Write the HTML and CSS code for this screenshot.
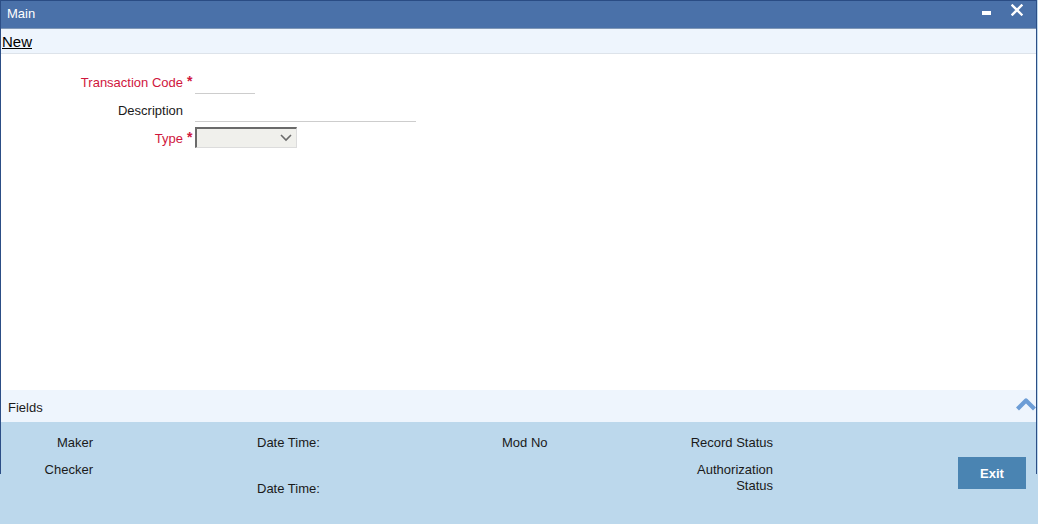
FILE: index.html
```html
<!DOCTYPE html>
<html>
<head>
<meta charset="utf-8">
<link rel="stylesheet" href="styles.css">
</head>
<body>
<div class="window">
  <div class="titlebar">
    <span class="title">Main</span>
    <div class="controls">
      <svg class="ico-min" width="9" height="4" viewBox="0 0 9 4"><rect x="0" y="0" width="9" height="4" fill="#fff"/></svg>
      <svg class="ico-close" width="12" height="12" viewBox="0 0 12 12"><path d="M1.5 1.5 L10.5 10.5 M10.5 1.5 L1.5 10.5" stroke="#fff" stroke-width="2.4" stroke-linecap="square"/></svg>
    </div>
  </div>
  <div class="toolbar"><span class="new">New</span></div>
  <div class="content">
    <div class="form">
      <label class="lbl req">Transaction Code</label><span class="star">*</span><div class="field"><div class="input short"></div></div>
      <label class="lbl">Description</label><span class="star"></span><div class="field"><div class="input long"></div></div>
      <label class="lbl req">Type</label><span class="star">*</span><div class="field"><div class="select"><svg width="12" height="8" viewBox="0 0 12 8"><path d="M1 1 L6 6 L11 1" fill="none" stroke="#6b6b6b" stroke-width="1.6"/></svg></div></div>
    </div>
  </div>
  <div class="fieldsbar">
    <span class="fields">Fields</span>
    <svg class="chev" width="22" height="14" viewBox="0 0 22 14"><path d="M2.5 12 L11 3.5 L19.5 12" fill="none" stroke="#6c9dd6" stroke-width="4.2" stroke-linejoin="round"/></svg>
  </div>
  <div class="footer">
    <div class="col c1"><span>Maker</span><span>Checker</span></div>
    <div class="col c2"><span>Date Time:</span><span>Date Time:</span></div>
    <div class="col c3"><span>Mod No</span></div>
    <div class="col c4"><span>Record Status</span><span>Authorization<br>Status</span></div>
    <div class="col c5"><button class="exit">Exit</button></div>
  </div>
</div>
</body>
</html>
```
FILE: styles.css
```css
html, body {
  margin: 0;
  padding: 0;
}
body {
  background: #bcd8ec;
  font-family: "Liberation Sans", Arial, sans-serif;
  font-size: 13px;
  color: #1a1a1a;
  width: 1038px;
  height: 524px;
  overflow: hidden;
}
.window {
  width: 1037px;
  height: 474px;
  box-sizing: border-box;
  border-left: 1px solid #2c4e86;
  border-right: 1px solid #2c4e86;
  display: flex;
  flex-direction: column;
  background: #fff;
}
.titlebar {
  height: 28px;
  box-sizing: border-box;
  border-top: 1px solid #2a4c84;
  background: #4a71a9;
  display: flex;
  align-items: center;
  justify-content: space-between;
  padding: 0 0 0 6px;
  flex: none;
}
.title {
  color: #fff;
  font-size: 13px;
  margin-top: -2px;
}
.controls {
  display: flex;
  align-items: flex-start;
  height: 27px;
}
.ico-min {
  margin-top: 10px;
  margin-right: 20px;
}
.ico-close {
  margin-top: 3px;
  margin-right: 13px;
}
.toolbar {
  height: 26px;
  box-sizing: border-box;
  background: #eef5fd;
  border-top: 1px solid #7f97b6;
  border-bottom: 1px solid #dde3ea;
  display: flex;
  align-items: center;
  padding-left: 1px;
  flex: none;
}
.new {
  font-size: 15px;
  color: #000;
  text-decoration: underline;
  margin-top: 1px;
}
.content {
  height: 336px;
  flex: none;
  padding-top: 14px;
  box-sizing: border-box;
}
.form {
  display: grid;
  grid-template-columns: 182px 12px auto;
  grid-auto-rows: 28px;
  align-items: center;
}
.lbl {
  text-align: right;
  color: #1a1a1a;
}
.lbl.req {
  color: #d0163d;
}
.star {
  color: #d0163d;
  font-size: 14px;
  font-weight: bold;
  padding-left: 4px;
  margin-top: -3px;
}
.field {
  display: flex;
  align-items: center;
}
.input {
  height: 24px;
  box-sizing: border-box;
  border-bottom: 1px solid #cdcdcd;
}
.input.short { width: 60px; }
.input.long { width: 221px; }
.select {
  width: 102px;
  height: 21px;
  box-sizing: border-box;
  background: #f0f0ec;
  border-style: solid;
  border-width: 2px 1px 1px 2px;
  border-color: #6a6a6a #dcdcdc #dcdcdc #6a6a6a;
  display: flex;
  align-items: center;
  justify-content: flex-end;
  padding-right: 4px;
  margin-top: -2px;
}
.fieldsbar {
  height: 32px;
  flex: none;
  background: #eef5fd;
  display: flex;
  align-items: center;
  justify-content: space-between;
  padding-left: 7px;
}
.fields {
  font-size: 13px;
  margin-top: 3px;
}
.chev {
  margin-top: -4px;
  margin-right: -1px;
}
.footer {
  height: 102px;
  flex: none;
  background: #bcd8ec;
  display: flex;
  align-items: flex-start;
  padding-top: 13px;
  box-sizing: border-box;
  line-height: 16px;
}
.col {
  display: flex;
  flex-direction: column;
}
.c1 {
  width: 92px;
  text-align: right;
  gap: 11px;
}
.c2 {
  margin-left: 164px;
  width: 245px;
  gap: 30px;
}
.c3 {
  width: 150px;
}
.c4 {
  width: 121px;
  text-align: right;
  gap: 11px;
}
.c5 {
  margin-left: 185px;
  padding-top: 22px;
}
.exit {
  width: 68px;
  height: 32px;
  border: none;
  background: #4a84b2;
  color: #fff;
  font-family: "Liberation Sans", Arial, sans-serif;
  font-weight: bold;
  font-size: 13px;
  padding: 0;
}
```
